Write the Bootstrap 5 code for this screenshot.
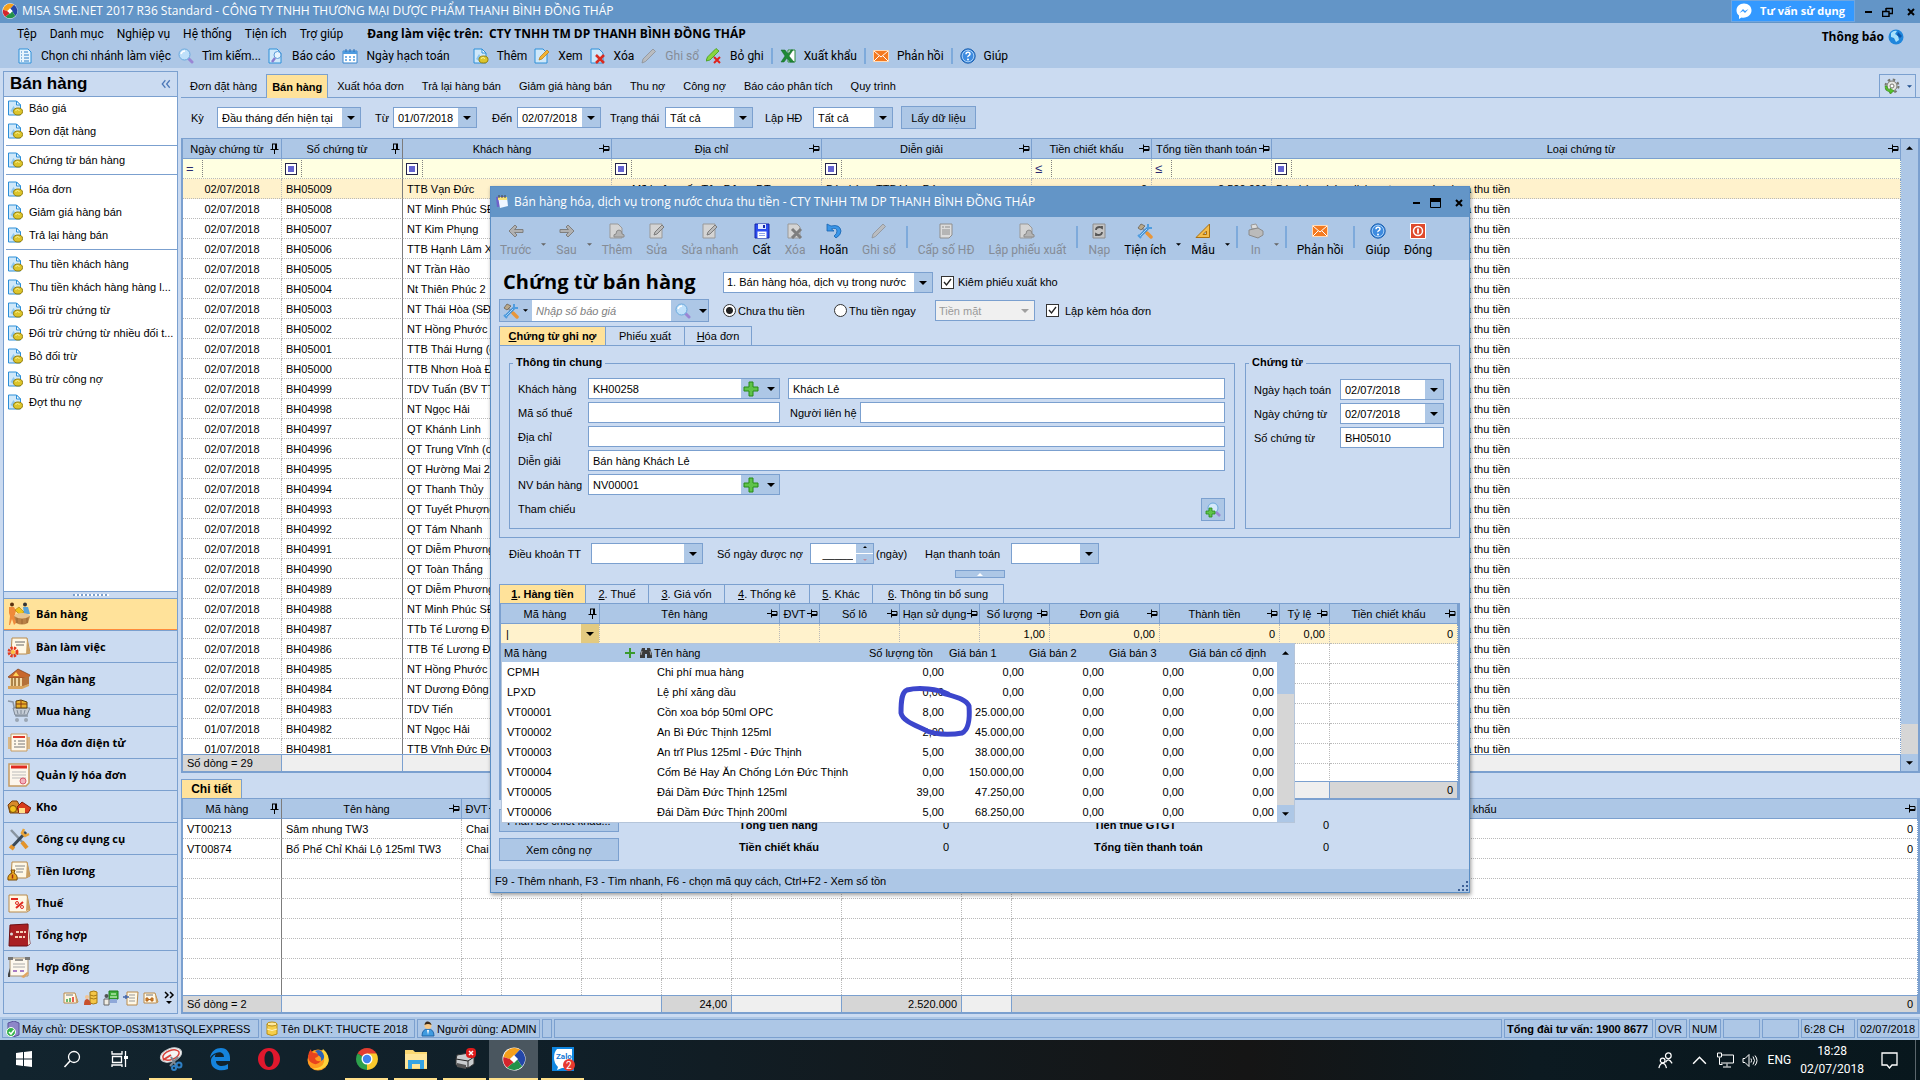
<!DOCTYPE html>
<html lang="vi">
<head>
<meta charset="utf-8">
<meta name="viewport" content="width=device-width, initial-scale=1">
<title>MISA SME.NET 2017 R36 Standard</title>
<link href="https://cdn.jsdelivr.net/npm/bootstrap@5.3.0/dist/css/bootstrap.min.css" rel="stylesheet">
<style>
:root{--bar:#adc7e6;--pane:#cbdbf1;--line:#7ba0cf;--title:#6395c7;--hot:#ffe29a;--sel:#fff2cc;--flt:#ffffe1;--grid:#b9b9b9;
--arrow:url("data:image/svg+xml,%3Csvg xmlns='http://www.w3.org/2000/svg' width='18' height='19'%3E%3Cpath d='M0 0h18v19H0z' fill='%23adc7e6'/%3E%3Cpath d='M5 8h8l-4 4z'/%3E%3C/svg%3E");
--arrow-off:url("data:image/svg+xml,%3Csvg xmlns='http://www.w3.org/2000/svg' width='18' height='19'%3E%3Cpath d='M5 8h8l-4 4z' fill='%23a0a0a0'/%3E%3C/svg%3E")}
body{font:11px/14px "Liberation Sans",Arial,sans-serif;color:#000;background:var(--pane);overflow:hidden}
.ui-seg{font-family:"Open Sans","Noto Sans",sans-serif;font-size:12px}
.ui-tool{font-family:Roboto,"Noto Sans",sans-serif;font-size:12px}
.ic{width:16px;height:16px;flex:none;display:block}
button{font:inherit;color:inherit;border:0;background:none;padding:0}
a{color:inherit;text-decoration:none}
.app-title{height:23px;background:var(--title);color:#fff;padding-left:2px}
.advise{height:22px;background:#3399ff;border:1px solid #6fa6e0;color:#fff;font-size:11px;font-weight:700;padding:0 9px 0 4px}
.win-ctl{color:#000}
.win-ctl svg{width:11px;height:10px}
.menu-area{background:var(--bar);height:45px}
.menu-area nav{padding-left:17px;height:22px}
.menu-list{gap:13px}
.notice{margin:0 16px 16px 0}
.tool-row{height:22px;padding-left:17px;gap:7px}
.tool-row button{height:22px;gap:8px}
.tool-row .handle{width:9px}
.vsep{width:2px;height:16px;background:#7eaadb;flex:none}
.off{color:#858c96}
.side{width:175px;margin:3px 0 0 3px;border:1px solid var(--line);background:#fff;flex:none}
.side-head{height:25px;background:var(--pane);border-bottom:1px solid var(--line);font-size:17px;font-weight:700;padding:0 6px}
.side-list a{display:flex;align-items:center;gap:5px;height:23px;padding-left:3px;white-space:nowrap}
.side-list a svg{width:17px}
.side-list hr{margin:2px 0 3px 2px;border:0;height:1px;background:var(--line);opacity:1}
.grip{height:7px;background:var(--pane);border-top:1px solid var(--line)}
.grip i{width:36px;height:2px;background:repeating-linear-gradient(90deg,#7ba0cf 0 2px,#fff 2px 4px)}
.big-nav button{height:32px;width:100%;border-top:1px solid var(--line);background:var(--pane);font-family:"Open Sans","Noto Sans",sans-serif;font-size:11px;font-weight:700;text-align:left;padding-left:3px;gap:5px}
.big-nav button.on{background:var(--hot);border-bottom:1px solid #ff8c3a}
.big-nav svg{width:24px;height:24px}
.side-foot{height:31px;background:var(--pane);border-top:1px solid var(--line);padding-right:2px;gap:4px}
.work{min-width:0;margin-left:3px}
.page-tabs{height:24px;margin-top:6px;border-bottom:1px solid var(--line)}
.page-tabs a{padding:0 9px;height:24px;line-height:24px}
.page-tabs a.on{background:var(--hot);border:1px solid var(--line);border-bottom:0;font-weight:700;padding:0 5px}
.gear-btn{border:1px solid var(--line);border-bottom:0;width:37px;height:24px}
.filters{height:41px;padding-left:10px}
.filters label{flex:none}
.lb1{width:26px}.lb2{width:32px;padding-left:14px}.lb3{width:40px;padding-left:15px}.lb4{width:64px;padding-left:9px}.lb5{width:60px;padding-left:12px}
.fld{height:21px;border:1px solid var(--line);border-radius:0;background-color:#fff;font:inherit;color:#000;padding:0 4px;outline:0;appearance:none;min-width:0;display:block}
select.fld,.fld.date{background-image:var(--arrow);background-repeat:no-repeat;background-position:right 0 center;background-size:18px 100%;padding-right:20px}
.h-row select.fld,.h-row2 select.fld{padding-left:3px}
select.fld:disabled{background-image:var(--arrow-off);background-color:#f0f0f0;color:#9a9a9a;opacity:1}
.pbtn{background:var(--bar);border:1px solid var(--line);height:23px}
.w144{width:144px}.w84{width:84px}.w88{width:88px}.w80{width:80px}.w75{width:75px}
/* grids */
.gridbox{border:1px solid var(--line);border-width:1px 2px 2px;background:#fff;min-height:0}
.dx{table-layout:fixed;width:100%;border-collapse:separate;border-spacing:0;margin:0;color:#000}
.table.dx>:not(caption)>*>*{height:20px;padding:0 4px;line-height:18px;border:0;border-right:1px dotted var(--grid);border-bottom:1px dotted var(--grid);white-space:nowrap;overflow:hidden;background:transparent;box-shadow:none;color:#000;vertical-align:middle}
.table.dx>thead>tr>th{background:var(--bar);font-weight:400;text-align:center;border-right:1px solid var(--line);border-bottom:1px solid var(--line);padding:0 1px 0 2px}
.table.dx>*>tr>*:last-child{border-right-color:var(--line)}
.hd{display:flex;align-items:center;justify-content:space-between}
.hd span{flex:1}
.hd svg{width:11px;height:11px;flex:none}
.table.dx>tbody>tr.flt>td{background:var(--flt);padding:0 0 0 3px}
.table.dx>tbody>tr.sel>td{background:var(--sel)}
.table.dx>tbody>tr>td.inset{padding-left:20px}
.fic{display:flex;align-items:center;height:17px;width:17px;border-right:1px dotted #808080;color:#2a2a70;font-size:13px}
.fic i{width:12px;height:12px;border:1px solid #24244a;background:#6464cf;box-shadow:inset 0 0 0 2px #fff}
.main-grid .frz,.sub-grid .frz{border-right:1px solid #7c7c7c!important}
.table.foot-row>tbody>tr>td{height:17px!important;line-height:16px!important;background:#efefef!important;border-bottom:0!important;border-top:1px solid var(--line)!important;border-right:1px solid var(--line)!important}
.table.foot-row>tbody>tr>td.g{background:#d6d6d6!important}
.vscroll{width:17px;background:#d6d6d6;flex:none}
.vscroll .up{background:var(--bar);flex:none;padding-top:7px}
.vscroll .up.grow{flex:1}
.vscroll .gap30{height:30px}
.vscroll .up50{height:50px}
.vscroll .dn{background:var(--bar);height:17px;flex:none}
.vscroll svg{width:7px;height:4px}
.lower{height:235px;margin-top:6px}
.chip-tab{background:var(--hot);border:1px solid var(--line);border-bottom:0;font-weight:700;width:61px;height:19px;font-size:12px;line-height:18px;text-align:center}
/* status */
.statusbar{height:23px;background:var(--bar);padding:2px 1px 2px 2px;gap:2px;margin-top:3px}
.statusbar>div{border:1px solid var(--line);height:19px;display:flex;align-items:center;padding:0 2px;gap:1px;white-space:nowrap}
.s257{width:257px}.s154{width:154px}.s123{width:123px}.s10{width:10px}.s149{width:149px}.s32{width:32px}.s37{width:37px}.s54{width:54px}.s62{width:62px}
/* taskbar */
.taskbar{height:40px;background:linear-gradient(90deg,#12242e 0,#101f28 30%,#151515 65%,#0c1a21 80%,#08171d 100%);color:#fff}
.taskbar button{width:49px;height:40px;display:flex;align-items:center;justify-content:center;border-bottom:2px solid transparent;background-clip:padding-box}
.taskbar button.sys{width:48px}
.taskbar button.sys+.run{margin-left:2px}
.taskbar button.run{border-image:linear-gradient(90deg,transparent 0 9%,#ffe08a 9% 91%,transparent 91%) 2}
.taskbar button.act{background:#4a565f;border-image:none;border-bottom-color:#ffe08a}
.taskbar svg{width:24px;height:24px}
.tray{gap:9px}
.taskbar .tray svg{width:17px;height:17px}
.tray .edge{width:5px;height:40px;border-left:1px solid #5b666c}
.tray .clock{line-height:18px}
/* dialog window */
.dlg{position:absolute;left:490px;top:186px;width:980px;height:707px;background:var(--pane);border:1px solid #5b8ec4;box-shadow:1px 2px 4px rgba(0,0,0,.4)}
.dlg-title{height:30px;background:var(--title);color:#fff;padding:0 5px 0 3px}
.dlg-tools{height:43px;background:var(--bar);padding-left:2px}
.dlg-tools button{padding:4px 7px 0;text-align:center;height:43px;line-height:18px;white-space:nowrap;flex:none}
.dlg-tools button svg.ic{margin:0 auto 2px}
.dlg-tools button.arr{padding:10px 0 0;width:11px}
.dlg-tools button.arr svg{width:5px;height:3px}
.dlg-tools .vsep{height:22px;margin:9px 3px 0}
.dlg h1{font:700 20px/26px "Open Sans","Noto Sans",sans-serif;margin:0}
.body-pad{padding:0 9px 0 8px;min-height:0}
.h-row{height:39px;padding:5px 4px 0}
.h-row2{height:23px}
.wtitle{width:220px}.w210{width:210px}.w100{width:100px}.w104{width:104px}
.chk{appearance:none;width:13px;height:13px;border:1px solid #333;background:#fff;margin:0;flex:none}
.chk:checked{background:#fff url("data:image/svg+xml,%3Csvg xmlns='http://www.w3.org/2000/svg' viewBox='0 0 11 11'%3E%3Cpath d='M2 5l2.500 3L9 2' fill='none' stroke='%23222' stroke-width='1.300'/%3E%3C/svg%3E")}
.rad{appearance:none;width:13px;height:13px;border:1px solid #333;border-radius:50%;background:#fff;margin:0;flex:none}
.rad:checked{background:radial-gradient(#222 0 3px,#fff 4px)}
.rad+label{padding-left:2px}
.opt1{margin-left:14px;width:111px}
.opt2{width:101px}
.opt3{margin-left:11px;gap:6px}
.quote{width:210px;border:1px solid var(--line);height:23px;background:var(--bar)}
.quote input{border:0;height:21px;width:139px;font-style:italic}
.quote .q1{width:32px;padding-left:3px}
.quote input::placeholder{color:#808080}
.tabs-b{margin-top:4px;height:19px}
.tabs-b button{border:1px solid var(--line);border-left:0;border-bottom:0;height:19px;text-align:center}
.tabs-b button:first-child{border-left:1px solid var(--line)}
.tabs-b .on{background:var(--hot);font-weight:700}
.tabs-b.top .t1{width:107px}.tabs-b.top .t2{width:79px}.tabs-b.top .t3{width:67px}
.tabpane{border:1px solid var(--line);height:193px;padding:17px 8px 8px 9px;gap:10px}
.grp{border:1px solid var(--line);height:166px;padding:14px 9px 0 8px;position:relative}
.grp .cap{position:absolute;top:-10px;left:3px;background:var(--pane);padding:0 3px;font-weight:700;line-height:16px}
.g2{width:206px;padding:15px 6px 0 8px;flex:none}
.frow{height:21px;margin-bottom:3px}
.frow>label.l{width:70px;flex:none;padding-top:4px}
.frow>label.m{width:80px;flex:none;padding:4px 0 0 10px}
.g2 .frow>label.l{width:86px}
.combo2{width:192px;height:21px;border:1px solid var(--line);background:var(--bar)}
.combo2 input{border:0;height:19px;width:152px}
.combo2 .ic{margin-left:2px}
.ref-btn{padding:0 3px}
.w192{width:192px}
.payrow{height:21px;margin-top:5px;padding-left:10px}
.pl1{width:82px}.pl2{width:107px;padding-left:14px}.pl3{width:86px}.day{width:51px;padding-left:2px}
.w112{width:112px}
.spin{width:64px;border:1px solid var(--line);height:21px;background:var(--bar)}
.spin input{border:0;height:19px;width:45px;text-align:right;padding:0 3px}
.spin i{height:1px}
.collapser{width:50px;height:8px;background:var(--bar);border:1px solid var(--line);margin:6px auto 0}
.collapser svg{width:6px;height:3px}
.lines{margin-top:6px}
.lines .n1{width:87px}.lines .n2{width:63px}.lines .n3{width:76px}.lines .n4{width:85px}.lines .n5{width:63px}.lines .n6{width:131px}
.lines .tabs-b{margin:0}
.dgrid{height:197px}
.cellcombo{margin:0 -4px;display:flex;height:19px}
.cellcombo input{border:0;background:transparent;width:80px;outline:0;padding:0 5px}
.cellcombo button{width:18px;background:#e3ca80;flex:none}
.sumrow{height:22px}
.totals{padding-top:9px}
.totals .pbtn{width:120px;margin-bottom:6px}
.sum1{margin-left:120px;width:210px;padding-top:9px}
.sum2{margin-left:145px;width:235px;padding-top:9px}
.dlg-foot{height:23px;background:var(--bar);padding-left:4px}
.drop{position:absolute;left:10px;top:456px;width:794px;height:180px;background:#fff;border:1px solid #b5c5da}
.drop table{table-layout:fixed;width:775px;border-spacing:0;border-collapse:separate}
.drop th{background:var(--bar);font-weight:400;height:18px;padding:0 0 0 2px;white-space:nowrap}
.drop th.nm{padding-right:14px}
.drop td{height:20px;padding:0 3px 0 5px;white-space:nowrap}
.drop .num{text-align:right}
.drop th svg{width:12px;height:12px}
.pen{position:absolute;left:403px;top:496px;width:80px;height:54px}
.num{text-align:right}
</style>
<script src="https://cdn.jsdelivr.net/npm/bootstrap@5.3.0/dist/js/bootstrap.bundle.min.js"></script>
</head>
<body class="vh-100 d-flex flex-column">
<svg width="0" height="0" class="position-absolute">
<defs>
<symbol id="misa" viewBox="0 0 24 24"><circle cx="12" cy="12" r="11.500" fill="#fff"/><path d="M1.500 10A11 11 0 0 1 18 2.500L12 9l-4 3z" fill="#f5a01c"/><path d="M18 2.500A11 11 0 0 1 20 19.500L15 12l-3-3z" fill="#2447a8"/><path d="M20 19.500A11 11 0 0 1 5 20.500L12 15l3-3z" fill="#23924a"/><path d="M5 20.500A11 11 0 0 1 1.500 10L8 12l4 3z" fill="#d4252c"/><path d="M12 8l4 4-4 4-4-4z" fill="#fff"/></symbol>
<symbol id="doc" viewBox="0 0 16 16"><path d="M1 1h8l4 4v10H1z" fill="#cfe8fa" stroke="#2d8fd8"/><path d="M9 1l4 4H9z" fill="#fff" stroke="#2d8fd8"/><path d="M3 11l3-5 2 3-2 4z" fill="#8cc6ee"/><ellipse cx="10.500" cy="11.500" rx="4.500" ry="3.500" fill="#dcc52c" stroke="#97810c"/><path d="M8 10.500q2-2 4 0" stroke="#fff7a0" fill="none"/></symbol>
<symbol id="list" viewBox="0 0 16 16"><path d="M2 1h9l3 3v11H2z" fill="#e7f4fd" stroke="#2d8fd8"/><path d="M4 4h1m2 0h4M4 7h1m2 0h5M4 10h1m2 0h5M4 13h1m2 0h5" stroke="#2d7fc8"/></symbol>
<symbol id="mag" viewBox="0 0 16 16"><path d="M10 10l4 4" stroke="#9a86d4" stroke-width="3" stroke-linecap="round"/><circle cx="6.500" cy="6.500" r="5.500" fill="#bfe0fa" stroke="#6aa9dd"/><path d="M3 6q1-3 4-3" stroke="#fff" stroke-width="1.500" fill="none"/></symbol>
<symbol id="rep" viewBox="0 0 16 16"><path d="M1 1h8l4 4v10H1z" fill="#cfe8fa" stroke="#2d8fd8"/><circle cx="9.500" cy="7" r="3.500" fill="#e6f4fe" stroke="#5b9cd8"/><path d="M7 10l-3 4" stroke="#8a7cd0" stroke-width="2.500"/></symbol>
<symbol id="cal" viewBox="0 0 16 16"><path d="M1 3h14v12H1z" fill="#fff" stroke="#3a86cc"/><path d="M1 3h14v3H1z" fill="#4d9be0"/><path d="M4 1v3m4-3v3m4-3v3" stroke="#2d6fb5"/><path d="M3 9h2m2 0h2m2 0h2M3 12h2m2 0h2m2 0h2" stroke="#4d9be0" stroke-width="1.500"/></symbol>
<symbol id="edit" viewBox="0 0 16 16"><path d="M1 1h8l4 4v10H1z" fill="#cfe8fa" stroke="#2d8fd8"/><path d="M5 12l1-3 7-7 2 2-7 7z" fill="#f5b331" stroke="#b57912" stroke-width=".7"/></symbol>
<symbol id="delx" viewBox="0 0 16 16"><path d="M1 1h8l4 4v10H1z" fill="#cfe8fa" stroke="#2d8fd8"/><path d="M6 7l8 8m0-8l-8 8" stroke="#d82c20" stroke-width="2.500"/></symbol>
<symbol id="pen0" viewBox="0 0 16 16"><path d="M1 15l1-4L12 1l2.500 2.500-10 10z" fill="#b9bcc0" stroke="#8d9195" stroke-width=".8"/></symbol>
<symbol id="penx" viewBox="0 0 16 16"><path d="M0 13l1.500-4L10 .500l3 2.500-9 9z" fill="#8ad63f" stroke="#3f9c12" stroke-width=".8"/><path d="M8 9l6 6m0-6l-6 6" stroke="#e0201a" stroke-width="2"/></symbol>
<symbol id="xls" viewBox="0 0 16 16"><path d="M8 2h7v12H8z" fill="#fff" stroke="#2b8a3a"/><path d="M1 2h4l3 4 3-4h2L9 8l5 6h-4l-3-4-3 4H1l4-6z" fill="#1f8a34" stroke="#136324" stroke-width=".5"/></symbol>
<symbol id="mail" viewBox="0 0 16 16"><path d="M.5 2.500h15v11H.5z" fill="#f4791f" stroke="#ffd9b5"/><path d="M1 3l7 6 7-6M1 13l5-5m9 5l-5-5" stroke="#fff" fill="none"/></symbol>
<symbol id="help" viewBox="0 0 16 16"><circle cx="8" cy="8" r="7.200" fill="#3d8be0" stroke="#1c5fae"/><circle cx="8" cy="8" r="5.800" fill="none" stroke="#a6cef5"/><path d="M6 6.200q0-2 2-2t2 1.800q0 1-1.200 1.700T8 9.200" stroke="#fff" stroke-width="1.500" fill="none"/><circle cx="8" cy="11.400" r="1" fill="#fff"/></symbol>
<symbol id="globe" viewBox="0 0 16 16"><circle cx="8" cy="8" r="7.500" fill="#1f86dc"/><path d="M3 4q3-3 6-2l-2 3 3 2 1 4-3 2-2-4-3-1z" fill="#a8e0fc"/><path d="M10 3l4 4-2 2-3-3z" fill="#0e55a8"/></symbol>
<symbol id="gear" viewBox="0 0 16 16"><circle cx="8" cy="8" r="5" fill="#e8e8e4" stroke="#77776f"/><circle cx="8" cy="8" r="6.500" fill="none" stroke="#77776f" stroke-width="2" stroke-dasharray="2.500 2.600"/><circle cx="8" cy="8" r="2" fill="#fff" stroke="#77776f"/><path d="M1 8q0 5 5 6v2l4-3-4-3v2q-3-1-3-4z" fill="#56c22c" stroke="#2e8a12" stroke-width=".5"/></symbol>
<symbol id="pinv" viewBox="0 0 11 11"><path d="M3 1h5M3.500 1v5.500M7.500 1v5.500M6.500 1v5.500M1.500 6.500h8M5.500 7v4" stroke="#000" fill="none"/></symbol>
<symbol id="pinh" viewBox="0 0 11 11"><path d="M4.500 1.500v8M4.500 3.500h5.500v4M4.500 6.500H10M4.500 7.500H10M0 5.500h4" stroke="#000" fill="none"/></symbol>
<symbol id="dn" viewBox="0 0 8 4"><path d="M0 0h8L4 4z"/></symbol>
<symbol id="up" viewBox="0 0 8 4"><path d="M0 4h8L4 0z"/></symbol>
<symbol id="dbl" viewBox="0 0 16 16"><path d="M7 2L2 8l5 6m7-12L9 8l5 6" stroke="#4c78b8" stroke-width="2" fill="none"/></symbol>
<symbol id="al" viewBox="0 0 16 16"><path d="M1 8l6-6 2 2-2.500 2.500H15v3H6.500L9 12l-2 2z" fill="#b1b1b1" stroke="#7f7f7f"/></symbol>
<symbol id="ar" viewBox="0 0 16 16"><path d="M15 8L9 2 7 4l2.500 2.500H1v3h8.500L7 12l2 2z" fill="#b1b1b1" stroke="#7f7f7f"/></symbol>
<symbol id="gdoc" viewBox="0 0 16 16"><path d="M1 1h8l4 4v10H1z" fill="#d4d4d4" stroke="#999"/><path d="M5 14q-1-3 2-3 0-4 3-4t3 4q3 0 2 3z" fill="#b4b4b4" stroke="#8c8c8c"/></symbol>
<symbol id="gedit" viewBox="0 0 16 16"><path d="M1 1h12v14H1z" fill="#d4d4d4" stroke="#999"/><path d="M5 12l1-3 7-7 2 2-7 7z" fill="#bbb" stroke="#7c7c7c"/></symbol>
<symbol id="gdel" viewBox="0 0 16 16"><path d="M1 1h9l3 3v11H1z" fill="#d4d4d4" stroke="#999"/><path d="M5 6l9 9m0-9l-9 9" stroke="#7e7e7e" stroke-width="3"/></symbol>
<symbol id="ginv" viewBox="0 0 16 16"><path d="M2 1h12v11l-3 3H2z" fill="#dcdcdc" stroke="#8e8e8e"/><path d="M4 4h2m1 0h5M4 7h8M4 9h8M4 11h8" stroke="#8e8e8e"/></symbol>
<symbol id="gref" viewBox="0 0 16 16"><path d="M2 1h12v14H2z" fill="#c4c4c4" stroke="#8e8e8e"/><path d="M5 7q0-3 4-3l2 1V3m0 6q0 3-4 3l-2-1v2" stroke="#555" stroke-width="1.800" fill="none"/></symbol>
<symbol id="save" viewBox="0 0 16 16"><path d="M1 1h14v14H1z" fill="#2c4df0" stroke="#1426a8"/><path d="M4 1h8v5H4z" fill="#dfe8ff"/><path d="M9 2h2v3H9z" fill="#1426a8"/><path d="M3.500 8.500h9V15h-9z" fill="#fff"/><path d="M5 10.500h6m-6 2h6" stroke="#8fa4e8"/></symbol>
<symbol id="undo" viewBox="0 0 16 16"><path d="M1 1v7h7L5.500 6q5-2 5.500 2 0 3-3 5l2 2q5-3 5-7-1-7-10-5z" fill="#3a96e8" stroke="#1762ae" stroke-width=".8"/></symbol>
<symbol id="tools" viewBox="0 0 16 16"><path d="M4 4l8 8" stroke="#8d949c" stroke-width="2"/><path d="M10 10l4 4" stroke="#e8963a" stroke-width="3.500" stroke-linecap="round"/><path d="M12 4l-9 9" stroke="#3f90d6" stroke-width="3"/><path d="M12 4l-9 9" stroke="#a9d5f6"/><path d="M1 5l3-4 4 2-4 4z" fill="#b9a98c" stroke="#6d6250" stroke-width=".8"/><path d="M11 1v4h4M1 12l3 3" stroke="#4f9de0" stroke-width="2" fill="none"/></symbol>
<symbol id="ruler" viewBox="0 0 16 16"><path d="M14.500 1v13.500H1z" fill="#f4bd4c" stroke="#a96f10"/><path d="M11.500 8v3.500H8z" fill="#adc7e6" stroke="#a96f10"/></symbol>
<symbol id="gprn" viewBox="0 0 16 16"><path d="M3 2l5-1 2 4-6 1z" fill="#ddd" stroke="#999"/><path d="M1 7l9-2 5 3v4l-5 3-9-3z" fill="#bbb" stroke="#8a8a8a"/></symbol>
<symbol id="power" viewBox="0 0 16 16"><path d="M.5.500h15v15H.5z" fill="#df4a2c" stroke="#fff"/><circle cx="8" cy="8" r="4.500" fill="none" stroke="#fff" stroke-width="1.500"/><path d="M8 5.500v5" stroke="#fff" stroke-width="1.800"/></symbol>
<symbol id="plus" viewBox="0 0 16 16"><path d="M6 1h4v5h5v4h-5v5H6v-5H1V6h5z" fill="#5fc34a" stroke="#278a16"/></symbol>
<symbol id="plus2" viewBox="0 0 12 12"><path d="M6 1v10M1 6h10" stroke="#3a9a2e" stroke-width="2"/></symbol>
<symbol id="bino" viewBox="0 0 12 12"><path d="M2 1h3v2h2V1h3l2 6v4H7V7H5v4H0V7z" fill="#3c3c3c"/><path d="M2 4l-1 4m9-4l1 4" stroke="#aaa"/></symbol>
<symbol id="note" viewBox="0 0 16 16"><path d="M2 3l8-1 1 10-8 1z" fill="#6d62c8"/><path d="M4 3h9l1 9-8 2z" fill="#f0f6ff"/><path d="M4 3h9v3H4z" fill="#f6e27a"/><path d="M5 1v3m3-3v3m3-3v3" stroke="#444"/></symbol>
<symbol id="msgr" viewBox="0 0 16 16"><path d="M8 .5C3.500.500.500 3.500.500 7.500c0 2 1 4 2.500 5V16l2.500-1.500C11 15.500 15.500 12 15.500 7.500 15.500 3.500 12.500.5 8 .5z" fill="#fff"/><path d="M3.500 10l3.500-4 2 2 3.500-2L9 10 7 8z" fill="#3399ff"/></symbol>
<symbol id="magp" viewBox="0 0 16 16"><circle cx="8" cy="6" r="5" fill="#d4e9fb" stroke="#6aa9dd"/><path d="M11 10l4 4" stroke="#9a86d4" stroke-width="2.500"/><path d="M4 6h3v3h3v3H7v3H4v-3H1V9h3z" fill="#5fc34a" stroke="#278a16" stroke-width=".8"/></symbol>
<!-- navigation pictures -->
<symbol id="n0" viewBox="0 0 24 24"><circle cx="5" cy="2.500" r="2" fill="#5a3210"/><path d="M2 5h5l2 4-1 3 1 9-2 2-2-6-2 6H2l1-9-1-3z" fill="#ef8a3a"/><circle cx="18" cy="2.500" r="2" fill="#333"/><path d="M16 5h5l2 7h-6z" fill="#5aa3d8"/><path d="M8 8l4-3 5 5-4 3z" fill="#f0c419" stroke="#a3790a" stroke-width=".6"/><ellipse cx="15" cy="14" rx="8" ry="3" fill="#e9c592"/><path d="M7 14q8 5 16 0l-2 7q-6 3-12 0z" fill="#b98146"/><path d="M10 16v5m5-4v5m5-6v5" stroke="#9a6430"/></symbol>
<symbol id="n1" viewBox="0 0 24 24"><path d="M5 3h15l3 15-4 1H4z" fill="#fff8e6" stroke="#b98a4a"/><path d="M20 3l3 15-4 1z" fill="#caa063"/><path d="M8 7h10M9 10h8" stroke="#666"/><circle cx="6" cy="17" r="4" fill="none" stroke="#e5391c" stroke-width="3" stroke-dasharray="2.200 1"/><circle cx="6" cy="17" r="2" fill="#ffbf3a"/></symbol>
<symbol id="n2" viewBox="0 0 24 24"><path d="M1 10L11 2l12 6-2 3H3z" fill="#c8672c" stroke="#7d3a12" stroke-width=".7"/><path d="M3 11h12v8H3z" fill="#f3d9a6"/><path d="M15 11l7-2v8l-7 3z" fill="#b4713a"/><path d="M5 11v8m3-8v8m4-8v8" stroke="#96682c" stroke-width="1.500"/><path d="M1 19h15l6-2v2l-7 3H1z" fill="#d9a45c"/><path d="M9 5l3 4H6z" fill="#ffd45a"/></symbol>
<symbol id="n3" viewBox="0 0 24 24"><path d="M1 2l5 1 3 14h12" fill="none" stroke="#8b96a4" stroke-width="1.500"/><path d="M6 9h17l-3 7H8z" fill="#c4ccd6" stroke="#7f8a98"/><path d="M10 11l1 4m3-4v4m4-4l-1 4" stroke="#7f8a98"/><path d="M9 2l5-1 6 2v6H9z" fill="#e8b02a" stroke="#5b3d0c"/><path d="M14 1v8M9 5h11" stroke="#8a3a10"/><circle cx="10" cy="21" r="2" fill="#9aa6b4"/><circle cx="19" cy="21" r="2" fill="#9aa6b4"/></symbol>
<symbol id="n4" viewBox="0 0 24 24"><path d="M1 6h3v12H1zM20 6h3v12h-3z" fill="#d9b888"/><path d="M4 3h16v17H4z" fill="#fff8ea" stroke="#c59b62"/><path d="M6 6h12" stroke="#dd3a2a" stroke-width="2"/><path d="M7 10h2m2 0h7M7 13h2m2 0h7M7 16h11" stroke="#777"/></symbol>
<symbol id="n5" viewBox="0 0 24 24"><path d="M2 1h20v19l-3 3H2z" fill="#fdf6ec" stroke="#c59b62" stroke-width="1.500"/><path d="M4 4h16" stroke="#e02a20" stroke-width="3"/><path d="M5 9h14M5 12h14M5 15h14" stroke="#bbb"/><circle cx="16" cy="18" r="3" fill="#f3b3bd" stroke="#d8596c"/></symbol>
<symbol id="n6" viewBox="0 0 24 24"><path d="M1 10l4-4h5l3 5v7H3z" fill="#d88a2a" stroke="#773c0d"/><path d="M10 12l5-5 9 6-3 5h-9z" fill="#d83c1c" stroke="#7d1c0a"/><path d="M12 13h6v5h-6z" fill="#ffe08a"/><circle cx="6" cy="14" r="3.500" fill="#f3c01d" stroke="#7a5206"/></symbol>
<symbol id="n7" viewBox="0 0 24 24"><path d="M4 3l15 16" stroke="#8894a0" stroke-width="2.500"/><path d="M15 15l5 6" stroke="#e4932a" stroke-width="4"/><path d="M19 5L4 21" stroke="#3c4a58" stroke-width="3"/><path d="M17 2l-2 4 3 3 4-2" stroke="#e8a43a" stroke-width="2.500" fill="none"/><path d="M3 19l4 3" stroke="#e4932a" stroke-width="4"/></symbol>
<symbol id="n8" viewBox="0 0 24 24"><path d="M5 3h15l3 14-4 2H4z" fill="#fff8e6" stroke="#b98a4a"/><path d="M20 3l3 14-4 2z" fill="#caa063"/><path d="M8 7h10M9 10h8M9 13h7" stroke="#888"/><path d="M4 11h4l-1 3q4 2 3 7H1q-1-5 4-7z" fill="#e9a520" stroke="#7b4b06"/><path d="M5.500 15.500v4" stroke="#a02a10" stroke-width="1.500"/></symbol>
<symbol id="n9" viewBox="0 0 24 24"><path d="M2 4h18l3 15-3 2H2z" fill="#fff8e6" stroke="#b98a4a"/><path d="M20 4l3 15-4 1z" fill="#caa063"/><path d="M4 8h7M9 17l7-6" stroke="#e02a20" stroke-width="2"/><circle cx="10" cy="12" r="1.500" fill="none" stroke="#e02a20"/><circle cx="15" cy="16" r="1.500" fill="none" stroke="#e02a20"/></symbol>
<symbol id="n10" viewBox="0 0 24 24"><path d="M3 2l18-1 2 20-3 2H2z" fill="#a91f22" stroke="#6c0f12"/><path d="M21 1l2 20-2 1z" fill="#f1e0d0"/><path d="M9 9h10M8 14h10" stroke="#f7d0b8" stroke-width="2" stroke-dasharray="3 1"/><circle cx="4.500" cy="11" r="1.500" fill="#ddd"/></symbol>
<symbol id="n11" viewBox="0 0 24 24"><path d="M3 3h18v18H3z" fill="#fdf8ee" stroke="#a59070"/><path d="M1 2h5v3H1zM18 2h5v3h-5z" fill="#777"/><path d="M8 5h8" stroke="#333"/><path d="M6 9h12M6 12h12" stroke="#aaa"/><path d="M6 16h4m3 0h4" stroke="#a77bc4" stroke-width="2"/><path d="M1 19l2-6v9H1z" fill="#444"/><path d="M14 22l6-5 2 1-5 5z" fill="#e0a560"/></symbol>
<symbol id="m1" viewBox="0 0 16 16"><path d="M1 3h11l3 9-2 1H1z" fill="#fff8e6" stroke="#b98a4a"/><path d="M12 3l3 9-2 1z" fill="#caa063"/><path d="M3 5h7" stroke="#777"/><path d="M4 12V9m3 3V8" stroke="#3aa64a" stroke-width="1.500"/><path d="M10 12V7" stroke="#e02a20" stroke-width="1.500"/></symbol>
<symbol id="m2" viewBox="0 0 16 16"><path d="M7 2q4-2 7 0v11q-4 2-7 0z" fill="#f5c646" stroke="#a87b12"/><path d="M7 5q4 2 7 0M7 8q4 2 7 0" stroke="#a87b12" fill="none"/><circle cx="4" cy="7" r="2" fill="#f3c594"/><path d="M1 15q0-6 3-6t4 6z" fill="#c8502c"/></symbol>
<symbol id="m3" viewBox="0 0 16 16"><path d="M6 1h9v8H6z" fill="#3fae3a" stroke="#1f7a1c"/><path d="M8 4h5M7 7h7" stroke="#e6ffe0"/><path d="M7 9h7v4H7z" fill="#8fa8d8"/><circle cx="3.500" cy="6" r="2" fill="#555"/><path d="M1 15V9h5v6z" fill="#f0ede4" stroke="#666"/></symbol>
<symbol id="m4" viewBox="0 0 16 16"><path d="M4 2h11l-1 13H4z" fill="#fff8e6" stroke="#b98a4a"/><path d="M6 5h6M6 8h6M6 11h6" stroke="#999"/><path d="M0 7h6M3 5v4" stroke="#4466a8" stroke-width="1.500"/></symbol>
<symbol id="m5" viewBox="0 0 16 16"><path d="M1 3h11l3 9-2 1H1z" fill="#fff8e6" stroke="#b98a4a"/><path d="M12 3l3 9-2 1z" fill="#caa063"/><path d="M3 5h7" stroke="#777"/><path d="M3 8h2v3H3zM8 8h2v3H8zM5 9.500h3" fill="#e08a2a" stroke="#b3641a"/></symbol>
</defs></svg>

<header class="app-title ui-seg d-flex align-items-center">
 <svg class="ic me-1"><use href="#misa"/></svg><span>MISA SME.NET 2017 R36 Standard - CÔNG TY TNHH THƯƠNG MẠI DƯỢC PHẨM THANH BÌNH ĐỒNG THÁP</span>
 <button class="advise ms-auto d-flex align-items-center gap-2"><svg class="ic"><use href="#msgr"/></svg>Tư vấn sử dụng</button>
 <div class="win-ctl d-flex gap-2 ms-2 me-1">
  <button aria-label="Thu nhỏ"><svg viewBox="0 0 11 10"><path d="M2 5h7" stroke="#000" stroke-width="2"/></svg></button>
  <button aria-label="Khôi phục"><svg viewBox="0 0 11 10"><path d="M4 1.500h6.500v5H7M.5 4.500H7v5H.5zM4 1v3" stroke="#000" stroke-width="1.500" fill="none"/></svg></button>
  <button class="ms-1" aria-label="Đóng"><svg viewBox="0 0 11 10"><path d="M3 2l6 6m0-6L3 8" stroke="#000" stroke-width="2"/></svg></button>
 </div>
</header>

<div class="menu-area ui-tool d-flex">
 <div class="flex-fill">
  <nav class="d-flex align-items-center gap-3">
   <div class="menu-list d-flex"><a href="#">Tệp</a><a href="#">Danh mục</a><a href="#">Nghiệp vụ</a><a href="#">Hệ thống</a><a href="#">Tiện ích</a><a href="#">Trợ giúp</a></div>
   <b class="ms-2 ui-seg">Đang làm việc trên: &nbsp;CTY TNHH TM DP THANH BÌNH ĐỒNG THÁP</b>
  </nav>
  <div class="tool-row d-flex align-items-center" id="tools1"></div>
 </div>
 <div class="notice ui-seg d-flex align-items-center gap-1"><b>Thông báo</b><svg class="ic"><use href="#globe"/></svg></div>
</div>

<main class="d-flex flex-fill overflow-hidden">
 <aside class="side d-flex flex-column">
  <div class="side-head d-flex align-items-center justify-content-between">Bán hàng<svg width="10" height="16"><use href="#dbl"/></svg></div>
  <nav class="side-list flex-fill" id="sideList"></nav>
  <div class="grip d-flex justify-content-center align-items-center"><i></i></div>
  <div class="big-nav" id="bigNav"></div>
  <div class="side-foot d-flex align-items-center justify-content-end">
   <svg class="ic"><use href="#m1"/></svg><svg class="ic"><use href="#m2"/></svg><svg class="ic"><use href="#m3"/></svg><svg class="ic"><use href="#m4"/></svg><svg class="ic"><use href="#m5"/></svg>
   <svg width="12" height="16" viewBox="0 0 12 16"><path d="M2 2l3 3-3 3m5-6l3 3-3 3" fill="none" stroke="#000" stroke-width="1.500"/><path d="M3 11h6l-3 3z"/></svg>
  </div>
 </aside>

 <section class="work flex-fill d-flex flex-column">
  <div class="page-tabs d-flex">
   <a href="#">Đơn đặt hàng</a><a href="#" class="on">Bán hàng</a><a href="#">Xuất hóa đơn</a><a href="#">Trả lại hàng bán</a><a href="#">Giảm giá hàng bán</a><a href="#">Thu nợ</a><a href="#">Công nợ</a><a href="#">Báo cáo phân tích</a><a href="#">Quy trình</a>
   <button class="gear-btn ms-auto me-1 d-flex align-items-center justify-content-around"><svg class="ic"><use href="#gear"/></svg><svg width="5" height="3"><use href="#dn" fill="#1d4c8c"/></svg></button>
  </div>
  <div class="filters d-flex align-items-center">
   <label for="f1" class="lb1">Kỳ</label><select id="f1" class="fld w144"><option>Đầu tháng đến hiện tại</option></select>
   <label for="f2" class="lb2">Từ</label><input id="f2" class="fld date w84" value="01/07/2018">
   <label for="f3" class="lb3">Đến</label><input id="f3" class="fld date w84" value="02/07/2018">
   <label for="f4" class="lb4">Trạng thái</label><select id="f4" class="fld w88"><option>Tất cả</option></select>
   <label for="f5" class="lb5">Lập HĐ</label><select id="f5" class="fld w80 me-2"><option>Tất cả</option></select>
   <button class="pbtn w75">Lấy dữ liệu</button>
  </div>
  <div class="gridbox main-grid flex-fill d-flex">
   <div class="flex-fill d-flex flex-column overflow-hidden">
    <div class="flex-fill overflow-hidden"><table class="table dx" id="mainGrid"></table></div>
    <table class="table dx foot-row" id="mainFoot"></table>
   </div>
   <div class="vscroll d-flex flex-column">
    <div class="up grow d-flex flex-column align-items-center"><svg><use href="#up"/></svg></div>
    <div class="gap30"></div>
    <div class="dn d-flex justify-content-center align-items-center"><svg><use href="#dn"/></svg></div>
   </div>
  </div>
  <div class="lower d-flex flex-column">
   <button class="chip-tab">Chi tiết</button>
   <div class="gridbox sub-grid flex-fill d-flex flex-column">
    <div class="flex-fill overflow-hidden"><table class="table dx" id="subGrid"></table></div>
    <table class="table dx foot-row" id="subFoot"></table>
   </div>
  </div>
 </section>
</main>

<footer class="statusbar d-flex">
 <div class="s257"><svg class="ic" viewBox="0 0 16 16"><path d="M3 2l6-2 5 2v12l-6 2-5-2z" fill="#8d86c8" stroke="#5a549a"/><circle cx="6" cy="11" r="4.500" fill="#35b34a" stroke="#fff"/><path d="M4 11l2 2 3-4" stroke="#fff" stroke-width="1.500" fill="none"/></svg>Máy chủ: DESKTOP-0S3M13T\SQLEXPRESS</div>
 <div class="s154"><svg class="ic" viewBox="0 0 16 16"><path d="M3 3v10q5 3 10 0V3z" fill="#f6cf4a" stroke="#b98d14"/><ellipse cx="8" cy="3" rx="5" ry="2" fill="#fdeaa0" stroke="#b98d14"/><path d="M3 8q5 3 10 0" stroke="#fff3c0" fill="none"/></svg>Tên DLKT: THUCTE 2018</div>
 <div class="s123"><svg class="ic" viewBox="0 0 16 16"><path d="M2 15q0-7 6-7t6 7z" fill="#3f9be0" stroke="#2166a8"/><circle cx="8" cy="4.500" r="3.500" fill="#f7c98a"/><path d="M4.500 4Q5 0 8 .5T11.500 4Q8 2 4.500 4z" fill="#3a2a1a"/><path d="M7 9h2l-1 5z" fill="#fff"/></svg>Người dùng: ADMIN</div>
 <div class="s10"></div><div class="flex-fill"></div>
 <div class="s149"><b>Tổng đài tư vấn: 1900 8677</b></div><div class="s32">OVR</div><div class="s32">NUM</div><div class="s37"></div><div class="s37"></div><div class="s54">6:28 CH</div><div class="s62">02/07/2018</div>
</footer>

<div class="taskbar ui-tool d-flex" role="toolbar">
 <button class="sys" aria-label="Start"><svg viewBox="-4 -4 24 24"><path d="M0 2l7-1v6.500H0zM8 1l8-1v7.500H8zM0 8.500h7V15l-7-1zM8 8.500h8V16l-8-1z" fill="#fff"/></svg></button>
 <button class="sys" aria-label="Search"><svg viewBox="-3 -3 24 24"><circle cx="11" cy="7" r="5.500" fill="none" stroke="#fff" stroke-width="1.300"/><path d="M7 11l-5.500 6" stroke="#fff" stroke-width="1.500"/></svg></button>
 <button class="sys" aria-label="Task view"><svg viewBox="-3 -3 24 24"><path d="M1 1v3h10V1M1.500 6.500h9v6h-9zM1 17v-2h10v2M14.500 1v16" stroke="#fff" fill="none" stroke-width="1.300"/><path d="M13 6h4v3h-4z" fill="#fff"/></svg></button>
 <button class="run" aria-label="Snipping Tool"><svg viewBox="0 0 24 24"><ellipse cx="12" cy="8" rx="11" ry="6.500" transform="rotate(-20 12 8)" fill="#f4f4f4" stroke="#c9ccd0" stroke-width="1"/><ellipse cx="12" cy="8" rx="8.500" ry="4.500" transform="rotate(-20 12 8)" fill="none" stroke="#d8403a" stroke-width="1.500"/><path d="M4 13l8-5" stroke="#d8403a" stroke-width="2"/><path d="M12 10l6 10m1-10l-8 9" stroke="#7b8894" stroke-width="2"/><circle cx="20" cy="18" r="2.500" fill="none" stroke="#2e7fc4" stroke-width="2"/><circle cx="15" cy="21" r="2" fill="none" stroke="#2e7fc4" stroke-width="2"/></svg></button>
 <button aria-label="Edge"><svg viewBox="0 0 24 24"><path d="M2 11C3 4 8 1 13 1c6 0 9 5 9 10v3H8c0 6 8 6 12 3v5c-7 3-17 1-17-8 0-4 3-6 5-7-1 1-1 2-1 3h9c0-7-10-6-14 1z" fill="#1583dc"/></svg></button>
 <button aria-label="Opera"><svg viewBox="0 0 24 24"><path d="M12 1a11 11 0 1 0 0 22 11 11 0 0 0 0-22zm0 3c3 0 4.500 4 4.500 8S15 20 12 20s-4.500-4-4.500-8S9 4 12 4z" fill="#e0182d" fill-rule="evenodd"/></svg></button>
 <button aria-label="Firefox"><svg viewBox="0 0 24 24"><circle cx="12" cy="13" r="10.500" fill="#ff9a1f"/><path d="M20 5q6 9-1 15-7 5-13 1 10 1 12-6 1-5-3-9l2-4z" fill="#ffd23a"/><path d="M2 9q1-5 3-7 0 3 3 4 4 0 5 2-2 3-4 3 1 4 6 3-4 5-9 2-4-2-4-7z" fill="#e8431f"/><path d="M9 4q5-3 8 2 3 6-2 8 1-4-3-6 0-2-3-4z" fill="#2b63b8"/></svg></button>
 <button class="run" aria-label="Chrome"><svg viewBox="0 0 24 24"><path d="M12 12L2.500 6.500A11 11 0 0 1 21.500 6.500z" fill="#e23d30"/><path d="M12 12V6.500h9.500A11 11 0 0 1 12 23z" fill="#fbc92c"/><path d="M12 12v11A11 11 0 0 1 2.500 6.500z" fill="#2da14c"/><circle cx="12" cy="12" r="5.500" fill="#fff"/><circle cx="12" cy="12" r="4.200" fill="#3f83ee"/></svg></button>
 <button class="run" aria-label="Explorer"><svg viewBox="0 0 24 24"><path d="M1 3h8l2 2h12v17H1z" fill="#fbd873"/><path d="M1 7h22v14H1z" fill="#ffe59a"/><path d="M4 13h16v9h-4v-5H8v5H4z" fill="#36a3e4"/></svg></button>
 <button class="run" aria-label="Printer"><svg viewBox="0 0 24 24"><path d="M4 8l12-2 5 3v8l-6 4-12-3v-6z" fill="#c9ccce" stroke="#333"/><path d="M3 12l12 2 6-4M15 14v7" stroke="#222" fill="none"/><path d="M4 16l9 2v4l-9-2z" fill="#555"/><rect x="13" y="1" width="10" height="10" rx="4" fill="#e01b1b"/><path d="M16 4l4 4m0-4l-4 4" stroke="#fff" stroke-width="1.500"/></svg></button>
 <button class="act" aria-label="MISA"><svg><use href="#misa"/></svg></button>
 <button class="run" aria-label="Zalo"><svg viewBox="0 0 24 24"><path d="M1 0h22v24H1z" fill="#0f86e0"/><path d="M6 2h15v19H11l-5 2 1-3q-4-4-4-9 0-6 3-9z" fill="#fff"/><text x="5" y="12" font-size="8" font-weight="700" fill="#1377d4">Zalo</text><circle cx="18" cy="18" r="6" fill="#e8392f"/><text x="15" y="22" font-size="10" fill="#fff">2</text></svg></button>
 <div class="tray ms-auto d-flex align-items-center">
  <svg class="me-2" viewBox="0 0 16 18" fill="none" stroke="#fff" stroke-width="1.300"><circle cx="11" cy="4" r="3"/><path d="M8 11q3-6 7 1"/><circle cx="5" cy="9" r="2.500"/><path d="M1 17q1-5 4-5t4 5"/></svg>
  <svg viewBox="-1 -1 16 16" fill="none" stroke="#fff" stroke-width="1.400"><path d="M1 10l6-6 6 6"/></svg>
  <div class="d-flex gap-2"><svg viewBox="0 0 17 16" fill="none" stroke="#fff"><path d="M5 2.500h11.500v8H4M10 11v3M6 14.500h8M.5.500h4v4h-4zM2.500 5v7h3"/></svg>
  <svg viewBox="0 0 17 16" fill="none" stroke="#fff"><path d="M1 6h2l4-4v12l-4-4H1zM9 6q1 2 0 4M11 4q3 4 0 8M13 3q4 5 0 10"/></svg></div>
  <span>ENG</span>
  <div class="clock text-center">18:28<br>02/07/2018</div>
  <svg class="ms-2" viewBox="0 0 17 17" fill="none" stroke="#fff" stroke-width="1.300"><path d="M1 1h15v12h-5l-2.500 3L6 13H1z"/></svg>
  <i class="edge ms-2"></i>
 </div>
</div>

<div class="dlg d-flex flex-column" role="dialog" aria-label="Chứng từ bán hàng">
 <div class="dlg-title ui-seg d-flex align-items-center">
  <svg class="ic me-1"><use href="#note"/></svg><span>Bán hàng hóa, dịch vụ trong nước chưa thu tiền - CTY TNHH TM DP THANH BÌNH ĐỒNG THÁP</span>
  <div class="win-ctl d-flex gap-2 ms-auto">
   <button aria-label="Thu nhỏ"><svg viewBox="0 0 11 10"><path d="M2 5h7" stroke="#000" stroke-width="2"/></svg></button>
   <button aria-label="Phóng to"><svg viewBox="0 0 11 10"><path d="M.5 1v8.500h10V1z" stroke="#000" fill="none"/><path d="M0 0h11v4H0z"/></svg></button>
   <button class="ms-1" aria-label="Đóng"><svg viewBox="0 0 11 10"><path d="M3 2l6 6m0-6L3 8" stroke="#000" stroke-width="2"/></svg></button>
  </div>
 </div>
 <div class="dlg-tools ui-tool d-flex" id="tools2"></div>
 <div class="body-pad flex-fill">
  <div class="h-row d-flex align-items-center">
   <h1 class="wtitle">Chứng từ bán hàng</h1>
   <select class="fld w210" aria-label="Loại chứng từ"><option>1. Bán hàng hóa, dịch vụ trong nước</option></select>
   <input type="checkbox" class="chk ms-2" id="c1" checked><label for="c1" class="ms-1">Kiêm phiếu xuất kho</label>
  </div>
  <div class="h-row2 d-flex align-items-center">
   <div class="quote d-flex">
    <button class="q1 d-flex align-items-center gap-1" aria-label="Tiện ích"><svg class="ic"><use href="#tools"/></svg><svg width="5" height="3"><use href="#dn"/></svg></button>
    <input class="fld" placeholder="Nhập số báo giá" aria-label="Nhập số báo giá">
    <button class="d-flex align-items-center gap-2 ps-1" aria-label="Tìm"><svg class="ic"><use href="#mag"/></svg><svg width="8" height="4"><use href="#dn"/></svg></button>
   </div>
   <div class="opt1 d-flex align-items-center"><input type="radio" name="pay" id="r1" class="rad" checked><label for="r1">Chưa thu tiền</label></div>
   <div class="opt2 d-flex align-items-center"><input type="radio" name="pay" id="r2" class="rad"><label for="r2">Thu tiền ngay</label></div>
   <select class="fld w100" disabled aria-label="Hình thức"><option>Tiền mặt</option></select>
   <div class="opt3 d-flex align-items-center"><input type="checkbox" class="chk" id="c2" checked><label for="c2">Lập kèm hóa đơn</label></div>
  </div>
  <div class="tabs-b top d-flex"><button class="t1 on"><u>C</u>hứng từ ghi nợ</button><button class="t2">Phiếu <u>x</u>uất</button><button class="t3"><u>H</u>óa đơn</button></div>
  <div class="tabpane d-flex">
   <div class="grp flex-fill">
    <span class="cap">Thông tin chung</span>
    <div class="frow d-flex"><label class="l" for="k1">Khách hàng</label><div class="combo2 d-flex me-2"><input class="fld" id="k1" value="KH00258"><button aria-label="Thêm"><svg class="ic"><use href="#plus"/></svg></button><button class="ms-2" aria-label="Chọn"><svg width="8" height="4" class="d-block"><use href="#dn"/></svg></button></div><input class="fld flex-fill" value="Khách Lẻ" aria-label="Tên khách hàng"></div>
    <div class="frow d-flex"><label class="l" for="k2">Mã số thuế</label><input class="fld w192" id="k2"><label for="k3" class="m">Người liên hệ</label><input class="fld flex-fill" id="k3"></div>
    <div class="frow d-flex"><label class="l" for="k4">Địa chỉ</label><input class="fld flex-fill" id="k4"></div>
    <div class="frow d-flex"><label class="l" for="k5">Diễn giải</label><input class="fld flex-fill" id="k5" value="Bán hàng Khách Lẻ"></div>
    <div class="frow d-flex"><label class="l" for="k6">NV bán hàng</label><div class="combo2 d-flex"><input class="fld" id="k6" value="NV00001"><button aria-label="Thêm"><svg class="ic"><use href="#plus"/></svg></button><button class="ms-2" aria-label="Chọn"><svg width="8" height="4" class="d-block"><use href="#dn"/></svg></button></div></div>
    <div class="frow d-flex justify-content-between"><label class="l" for="k7">Tham chiếu</label><button id="k7" class="pbtn ref-btn"><svg class="ic"><use href="#magp"/></svg></button></div>
   </div>
   <div class="grp g2">
    <span class="cap">Chứng từ</span>
    <div class="frow d-flex"><label class="l" for="d1">Ngày hạch toán</label><input id="d1" class="fld date w104" value="02/07/2018"></div>
    <div class="frow d-flex"><label class="l" for="d2">Ngày chứng từ</label><input id="d2" class="fld date w104" value="02/07/2018"></div>
    <div class="frow d-flex"><label class="l" for="d3">Số chứng từ</label><input id="d3" class="fld w104" value="BH05010"></div>
   </div>
  </div>
  <div class="payrow d-flex align-items-center">
   <label for="p1" class="pl1">Điều khoản TT</label><select id="p1" class="fld w112"></select>
   <label for="p2" class="pl2">Số ngày được nợ</label><div class="spin d-flex"><input id="p2" class="fld" value="_____"><div class="flex-fill d-flex flex-column justify-content-around align-items-center"><svg width="4" height="2"><use href="#up"/></svg><i class="w-100 bg-white"></i><svg width="4" height="2" fill="#c08a9a"><use href="#dn"/></svg></div></div>
   <span class="day">(ngày)</span>
   <label for="p3" class="pl3">Hạn thanh toán</label><select id="p3" class="fld w88"></select>
  </div>
  <div class="collapser d-flex justify-content-center align-items-center"><svg fill="#fff"><use href="#up"/></svg></div>
  <div class="lines">
   <div class="tabs-b d-flex"><button class="n1 on"><u>1</u>. Hàng tiền</button><button class="n2"><u>2</u>. Thuế</button><button class="n3"><u>3</u>. Giá vốn</button><button class="n4"><u>4</u>. Thống kê</button><button class="n5"><u>5</u>. Khác</button><button class="n6"><u>6</u>. Thông tin bổ sung</button></div>
   <div class="gridbox dgrid d-flex flex-column">
    <div class="flex-fill overflow-hidden"><table class="table dx" id="lineGrid"></table></div>
    <table class="table dx foot-row" id="lineFoot"></table>
   </div>
  </div>
  <div class="totals d-flex">
   <div><button class="pbtn d-block">Phân bổ chiết khấu...</button><button class="pbtn d-block">Xem công nợ</button></div>
   <div class="sum1"><div class="sumrow d-flex justify-content-between"><b>Tổng tiền hàng</b><span>0</span></div><div class="sumrow d-flex justify-content-between"><b>Tiền chiết khấu</b><span>0</span></div></div>
   <div class="sum2"><div class="sumrow d-flex justify-content-between"><b>Tiền thuế GTGT</b><span>0</span></div><div class="sumrow d-flex justify-content-between"><b>Tổng tiền thanh toán</b><span>0</span></div></div>
  </div>
 </div>
 <div class="dlg-foot d-flex align-items-center justify-content-between"><span>F9 - Thêm nhanh, F3 - Tìm nhanh, F6 - chọn mã quy cách, Ctrl+F2 - Xem số tồn</span>
  <svg width="12" height="12" class="align-self-end" fill="#3c5f96"><path d="M9 1h2v2H9zM5 5h2v2H5zM9 5h2v2H9zM1 9h2v2H1zM5 9h2v2H5zM9 9h2v2H9z"/></svg></div>

 <div class="drop d-flex">
  <table id="dropTable"></table>
  <div class="vscroll d-flex flex-column">
   <div class="up up50 d-flex flex-column align-items-center"><svg><use href="#up"/></svg></div><div class="flex-fill"></div>
   <div class="dn d-flex justify-content-center align-items-center"><svg><use href="#dn"/></svg></div>
  </div>
 </div>
 <svg class="pen" viewBox="0 0 80 54"><path d="M54 11C44 6 25 4 13 7 8 9 7 16 7 30c2 9 17 13 26 18 12 5 30 3 35 2 6-3 8-14 7-27-3-7-13-9-26-13" fill="none" stroke="#3c46cc" stroke-width="5" stroke-linecap="round"/></svg>
</div>

<script>
const ic = n => `<svg class="ic"><use href="#${n}"/></svg>`;
const $ = id => document.getElementById(id);

const sep = '<i class="vsep"></i>';
$('tools1').innerHTML = [['list','Chọn chi nhánh làm việc'],['mag','Tìm kiếm...'],['rep','Báo cáo'],['cal','Ngày hạch toán'],0,['doc','Thêm'],['edit','Xem'],['delx','Xóa'],['pen0','Ghi sổ','off'],['penx','Bỏ ghi'],1,['xls','Xuất khẩu'],1,['mail','Phản hồi'],1,['help','Giúp']]
 .map(t => t === 0 ? '<i class="handle"></i>' : t === 1 ? sep : `<button class="d-flex align-items-center ${t[2] || ''}">${ic(t[0])}${t[1]}</button>`).join('');

const arr = off => `<button class="arr" aria-label="Mở"><svg viewBox="0 0 8 4" fill="${off ? '#666' : '#000'}"><path d="M0 0h8L4 4z"/></svg></button>`;
$('tools2').innerHTML = [['al','Trước',1,1],['ar','Sau',1,1],['gdoc','Thêm',1],['gedit','Sửa',1],['gedit','Sửa nhanh',1],['save','Cất'],['gdel','Xóa',1],['undo','Hoãn'],['pen0','Ghi sổ',1],0,['ginv','Cấp số HĐ',1],['gdoc','Lập phiếu xuất',1],0,['gref','Nạp',1],['tools','Tiện ích',0,1],['ruler','Mẫu',0,1],0,['gprn','In',1,1],0,['mail','Phản hồi'],0,['help','Giúp'],['power','Đóng']]
 .map(t => t ? `<button class="${t[2] ? 'off' : ''}">${ic(t[0])}${t[1]}</button>${t[3] ? arr(t[2]) : ''}` : sep).join('');

$('sideList').innerHTML = ['Báo giá','Đơn đặt hàng',0,'Chứng từ bán hàng',0,'Hóa đơn','Giảm giá hàng bán','Trả lại hàng bán',0,'Thu tiền khách hàng','Thu tiền khách hàng hàng l...','Đối trừ chứng từ','Đối trừ chứng từ nhiều đối t...','Bỏ đối trừ','Bù trừ công nợ','Đợt thu nợ']
 .map(t => t ? `<a href="#">${ic('doc')}${t}</a>` : '<hr>').join('');
$('bigNav').innerHTML = ['Bán hàng','Bàn làm việc','Ngân hàng','Mua hàng','Hóa đơn điện tử','Quản lý hóa đơn','Kho','Công cụ dụng cụ','Tiền lương','Thuế','Tổng hợp','Hợp đồng']
 .map((t, i) => `<button class="d-flex align-items-center ${i ? '' : 'on'}"><svg><use href="#n${i}"/></svg>${t}</button>`).join('');

const cols = w => '<colgroup>' + w.map(x => `<col${x ? ` style="width:${x}px"` : ''}>`).join('') + '</colgroup>';
const head = (h, frz) => '<thead><tr>' + h.map((t, i) => `<th${i === frz ? ' class="frz"' : ''}><div class="hd"><span>${t}</span>${t ? `<svg><use href="#${i <= frz ? 'pinv' : 'pinh'}"/></svg>` : ''}</div></th>`).join('') + '</tr></thead>';
const cells = (r, frz, al) => r.map((t, i) => `<td class="${i === frz ? 'frz ' : ''}${al[i] || ''}">${t}</td>`).join('');
const blank = n => Array(n).fill('');

const mw = [99,121,209,210,210,120,120,0];
const names = ['TTB Vạn Đức','NT Minh Phúc SĐ','NT Kim Phụng','TTB Hạnh Lâm XM','NT Trần Hào','Nt Thiên Phúc 2','NT Thái Hòa (SĐ)','NT Hồng Phước','TTB Thái Hưng (dn)','TTB Nhơn Hoà Đức','TDV Tuấn (BV TT)','NT Ngọc Hải','QT Khánh Linh','QT Trung Vĩnh (cl)','QT Hường Mai 2','QT Thanh Thủy','QT Tuyết Phượng','QT Tám Nhanh','QT Diễm Phương','QT Toàn Thắng','QT Diễm Phương','NT Minh Phúc SĐ','TTb Tế Lương Đức','TTB Tế Lương Đức','NT Hồng Phước','NT Dương Đông','TDV Tiến','NT Ngọc Hải','TTB Vĩnh Đức Đức'];
const mal = ['text-center','','','inset','','num','num',''];
const fi = ['=','b','b','b','b','≤','≤','b'].map((t, i) => `<td${i === 1 ? ' class="frz"' : ''}><div class="fic">${t === 'b' ? '<i></i>' : t}</div></td>`).join('');
$('mainGrid').innerHTML = cols(mw) + head(['Ngày chứng từ','Số chứng từ','Khách hàng','Địa chỉ','Diễn giải','Tiền chiết khấu','Tổng tiền thanh toán','Loại chứng từ'], 1) + '<tbody><tr class="flt">' + fi + '</tr>' +
 names.map((n, i) => `<tr class="${i ? '' : 'sel'}">` + cells([(i > 26 ? '01' : '02') + '/07/2018', 'BH0' + (5009 - i), n, i ? '' : 'Mỹ Luông, ấp Tân Đông, ĐT', i ? '' : 'Bán hàng TTB Vạn Đức', i ? '' : '0', i ? '' : '2.520.000', 'Bán hàng hóa, dịch vụ trong nước chưa thu tiền'], 1, mal) + '</tr>').join('') + '</tbody>';
$('mainFoot').innerHTML = cols(mw) + '<tbody><tr>' + cells(['Số dòng = 29', ...blank(7)], 1, ['g']) + '</tr></tbody>';

const sw = [99,180,40,80,80,70,110,120,50,0];
const sal = [...blank(9), 'num'];
$('subGrid').innerHTML = cols(sw) + head(['Mã hàng','Tên hàng','ĐVT',...blank(6),'Tiền chiết khấu'], 0) + '<tbody>' +
 [['VT00213','Sâm nhung TW3','Chai',...blank(6),'0'],['VT00874','Bổ Phế Chỉ Khái Lộ 125ml TW3','Chai',...blank(6),'0'],...Array(7).fill(blank(10))].map(r => '<tr>' + cells(r, 0, sal) + '</tr>').join('') + '</tbody>';
$('subFoot').innerHTML = cols([99,380,70,110,120,50,0]) + '<tbody><tr>' + cells(['Số dòng = 2','','24,00','','2.520.000','','0'], 0, ['g','','g num','','g num','','g num']) + '</tr></tbody>';

const lal = [...blank(5),'num','num','num','num','num'];
$('lineGrid').innerHTML = cols(sw) + head(['Mã hàng','Tên hàng','ĐVT','Số lô','Hạn sử dụng','Số lượng','Đơn giá','Thành tiền','Tỷ lệ','Tiền chiết khấu'], 0) + '<tbody><tr class="sel">' +
 cells(['<div class="cellcombo"><input aria-label="Mã hàng" value="|"><button aria-label="Chọn"><svg width="8" height="4" class="d-block mx-auto"><use href="#dn"/></svg></button></div>',...blank(4),'1,00','0,00','0','0,00','0'], -1, lal) + '</tr>' +
 Array(7).fill('<tr>' + cells(blank(10), -1, []) + '</tr>').join('') + '</tbody>';
$('lineFoot').innerHTML = cols(sw) + '<tbody><tr>' + cells([...blank(9), '0'], -1, [...blank(9), 'g num']) + '</tr></tbody>';

const items = [['CPMH','Chi phí mua hàng','0,00','0,00'],['LPXD','Lệ phí xăng dầu','0,00','0,00'],['VT00001','Cồn xoa bóp 50ml OPC','8,00','25.000,00'],['VT00002','An Bì Đức Thịnh 125ml','2,00','45.000,00'],['VT00003','An trĩ Plus 125ml - Đức Thịnh','5,00','38.000,00'],['VT00004','Cốm Bé Hay Ăn Chống Lớn Đức Thịnh','0,00','150.000,00'],['VT00005','Đái Dầm Đức Thịnh 125ml','39,00','47.250,00'],['VT00006','Đái Dầm Đức Thịnh 200ml','5,00','68.250,00']];
$('dropTable').innerHTML = cols([150,295,80,80,80,0]) + '<thead><tr><th><div class="d-flex justify-content-between align-items-center">Mã hàng<span class="d-flex gap-1"><svg><use href="#plus2"/></svg><svg><use href="#bino"/></svg></span></div></th>' +
 '<th class="nm"><div class="d-flex justify-content-between"><span>Tên hàng</span><span>Số lượng tồn</span></div></th>' + ['Giá bán 1','Giá bán 2','Giá bán 3','Giá bán cố định'].map(t => `<th>${t}</th>`).join('') + '</tr></thead><tbody>' +
 items.map(r => `<tr><td>${r[0]}</td><td><div class="d-flex justify-content-between"><span>${r[1]}</span><span>${r[2]}</span></div></td><td class="num">${r[3]}</td><td class="num">0,00</td><td class="num">0,00</td><td class="num">0,00</td></tr>`).join('') + '</tbody>';
</script>
</body>
</html>
